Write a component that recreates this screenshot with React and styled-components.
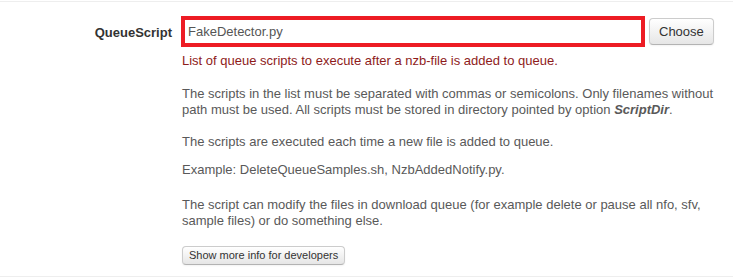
import React from 'react';
import styled, { createGlobalStyle } from 'styled-components';

const Global = createGlobalStyle`
  body {
    margin: 0;
    background: #fff;
    font-family: "Liberation Sans", Arial, sans-serif;
    font-size: 13px;
    line-height: 18px;
    color: #333;
  }
`;

const Page = styled.div`
  width: 733px;
  padding-top: 1px;
`;

const ControlGroup = styled.div`
  display: flex;
  border-top: 1px solid #eee;
  border-bottom: 1px solid #eee;
  padding: 14px 0 11px;
`;

const Label = styled.label`
  width: 172px;
  flex: none;
  text-align: right;
  font-weight: bold;
  padding-top: 8px;
`;

const Controls = styled.div`
  margin-left: 9px;
  flex: 1;
`;

const InputRow = styled.div`
  display: flex;
  align-items: center;
  gap: 4px;
`;

const Input = styled.input`
  width: 464px;
  height: 31px;
  box-sizing: border-box;
  border: 4px solid #ed1c24;
  padding: 0 3px;
  font: inherit;
  color: #555;
  outline: none;
`;

const Button = styled.button`
  font-family: inherit;
  font-size: ${p => (p.$mini ? '11px' : '13px')};
  line-height: ${p => (p.$mini ? '15px' : '17px')};
  padding: ${p => (p.$mini ? '1px 6px' : '4px 9px')};
  color: #333;
  background: linear-gradient(#fff, #e6e6e6);
  border: 1px solid #ccc;
  border-bottom-color: #b3b3b3;
  border-radius: 4px;
  box-shadow: inset 0 1px 0 rgba(255,255,255,.2), 0 1px 2px rgba(0,0,0,.05);
  cursor: pointer;
`;

const Help = styled.p`
  margin: 5px 0 0 1px;
  color: #8e1b1b;
`;

const Para = styled.p`
  margin: ${p => p.$gap}px 0 0 1px;
  color: #595959;
  line-height: 16px;
`;

const Actions = styled.div`
  margin: 17px 0 0 1px;
`;

export default function App() {
  return (
    <Page>
      <Global />
      <ControlGroup>
        <Label>QueueScript</Label>
        <Controls>
          <InputRow>
            <Input defaultValue="FakeDetector.py" />
            <Button>Choose</Button>
          </InputRow>
          <Help>List of queue scripts to execute after a nzb-file is added to queue.</Help>
          <Para $gap={16}>
            The scripts in the list must be separated with commas or semicolons. Only filenames without
            path must be used. All scripts must be stored in directory pointed by option <b><i>ScriptDir</i></b>.
          </Para>
          <Para $gap={16}>The scripts are executed each time a new file is added to queue.</Para>
          <Para $gap={12}>Example: DeleteQueueSamples.sh, NzbAddedNotify.py.</Para>
          <Para $gap={19}>
            The script can modify the files in download queue (for example delete or pause all nfo, sfv,
            sample files) or do something else.
          </Para>
          <Actions>
            <Button $mini>Show more info for developers</Button>
          </Actions>
        </Controls>
      </ControlGroup>
    </Page>
  );
}
